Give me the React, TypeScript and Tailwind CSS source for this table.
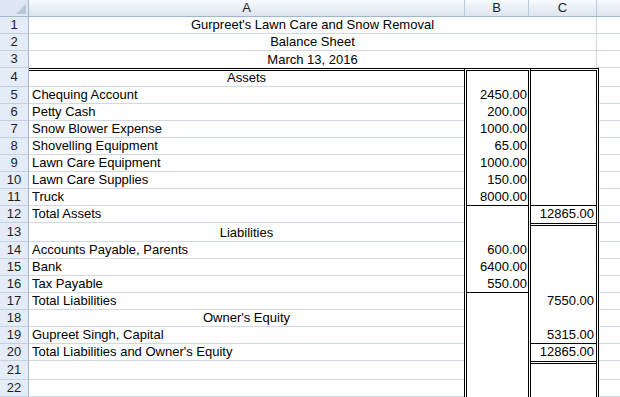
type RowDef = {
  n: number;
  a?: string;
  center?: boolean;
  b?: string;
  c?: string;
  bBottom?: boolean;
  cBottom?: boolean;
  cTopDouble?: boolean;
  tall?: boolean;
  first?: boolean;
};

const rows: RowDef[] = [
  { n: 4, a: 'Assets', center: true, tall: true, first: true },
  { n: 5, a: 'Chequing Account', b: '2450.00' },
  { n: 6, a: 'Petty Cash', b: '200.00' },
  { n: 7, a: 'Snow Blower Expense', b: '1000.00' },
  { n: 8, a: 'Shovelling Equipment', b: '65.00' },
  { n: 9, a: 'Lawn Care Equipment', b: '1000.00' },
  { n: 10, a: 'Lawn Care Supplies', b: '150.00' },
  { n: 11, a: 'Truck', b: '8000.00', bBottom: true, cBottom: true },
  { n: 12, a: 'Total Assets', c: '12865.00' },
  { n: 13, a: 'Liabilities', center: true, tall: true, cTopDouble: true },
  { n: 14, a: 'Accounts Payable, Parents', b: '600.00' },
  { n: 15, a: 'Bank', b: '6400.00' },
  { n: 16, a: 'Tax Payable', b: '550.00', bBottom: true },
  { n: 17, a: 'Total Liabilities', c: '7550.00' },
  { n: 18, a: "Owner's Equity", center: true },
  { n: 19, a: 'Gupreet Singh, Capital', c: '5315.00', cBottom: true },
  { n: 20, a: "Total Liabilities and Owner's Equity", c: '12865.00' },
  { n: 21, tall: true, cTopDouble: true },
  { n: 22 },
];

const titles = ["Gurpreet's Lawn Care and Snow Removal", 'Balance Sheet', 'March 13, 2016'];

function RowHead({ n }: { n: number }) {
  return (
    <div className="w-[29px] shrink-0 flex items-center justify-center border-r border-b border-r-[#9eb6ce] border-b-[#c3d0e1] bg-[#e4ecf7] text-[#1e1e1e]">
      {n}
    </div>
  );
}

function ColHead({ label, w }: { label: string; w: string }) {
  return (
    <div className={`${w} shrink-0 flex items-center justify-center border-r border-r-[#b8c8dc] text-[#1e1e1e]`}>
      {label}
    </div>
  );
}

export default function App() {
  return (
    <div className="w-[620px] h-[397px] overflow-hidden bg-white font-['Liberation_Sans',Arial,sans-serif] text-[13px] leading-[16px] text-black">
      {/* Column headers */}
      <div className="flex h-[17px] border-b border-b-[#9eb6ce] bg-gradient-to-b from-[#f8fafd] to-[#dce4ee]">
        <div className="w-[29px] shrink-0 relative border-r border-r-[#9eb6ce] bg-[#dde6f2]">
          <svg width="29" height="16" className="absolute left-0 top-0">
            <polygon points="16,14 26,14 26,4" fill="#b9c7d8" />
          </svg>
        </div>
        <ColHead label="A" w="w-[436px]" />
        <ColHead label="B" w="w-[64px]" />
        <ColHead label="C" w="w-[68px]" />
        <div className="flex-1" />
      </div>

      {/* Title rows, merged across A:C */}
      {titles.map((t, i) => (
        <div key={t} className="flex h-[17px]">
          <RowHead n={i + 1} />
          <div
            className={`w-[568px] shrink-0 flex items-end justify-center border-r border-[#d0d7e5] ${
              i < 2 ? 'border-b' : ''
            }`}
          >
            {t}
          </div>
          <div className={`flex-1 ${i < 2 ? 'border-b border-[#d0d7e5]' : 'border-b border-[#d0d7e5]'}`} />
        </div>
      ))}

      {/* Body */}
      {rows.map((r) => (
        <div key={r.n} className={`flex ${r.tall ? 'h-[19px]' : 'h-[17px]'}`}>
          <RowHead n={r.n} />
          <div
            className={`w-[435px] shrink-0 flex items-end px-[3px] border-b border-[#d0d7e5] whitespace-nowrap ${
              r.center ? 'justify-center' : ''
            } ${r.first ? 'border-t-[3px] border-double border-t-black' : ''}`}
          >
            {r.a}
          </div>
          <div
            className={`w-[67px] shrink-0 flex border-x-[3px] border-double border-black ${
              r.first ? 'border-t-[3px]' : ''
            }`}
          >
            <div
              className={`flex-1 flex items-end justify-end pr-[1px] border-b ${
                r.bBottom ? 'border-b-black' : 'border-b-transparent'
              }`}
            >
              {r.b}
            </div>
          </div>
          <div
            className={`w-[68px] shrink-0 flex border-r-[3px] border-double border-black ${
              r.first ? 'border-t-[3px]' : ''
            }`}
          >
            <div
              className={`flex-1 flex items-end justify-end pr-[2px] border-b border-double ${
                r.cBottom ? 'border-b-black' : 'border-b-transparent'
              } ${r.cTopDouble ? 'border-t-[3px] border-t-black' : ''}`}
            >
              {r.c}
            </div>
          </div>
          <div className="flex-1 border-b border-[#d0d7e5]" />
        </div>
      ))}
    </div>
  );
}
